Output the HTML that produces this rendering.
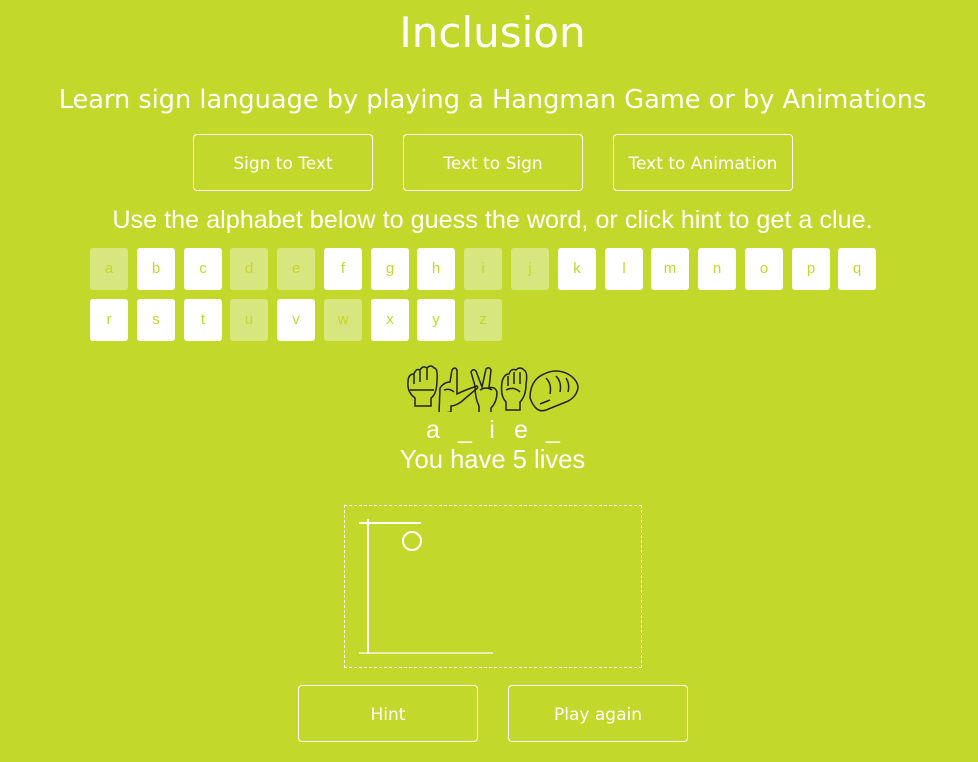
<!DOCTYPE html>
<html><head><style>
body{margin:0;width:978px;height:762px;background:#c2d82b;color:#fff;font-family:"DejaVu Sans",sans-serif;position:relative;overflow:hidden}
.a{position:absolute}
.btn{position:absolute;width:178px;height:55px;border:1px solid #fff;border-radius:4px;box-sizing:content-box;font-size:17px;line-height:58px;text-align:center}
.k{position:absolute;width:38px;height:42px;border-radius:3px;background:#fff;color:#c2d82b;font-family:"Liberation Sans",sans-serif;font-size:15px;line-height:41px;text-align:center}
.k.u{background:#d8e67f}
.w{position:absolute;top:414px;width:20px;margin-left:-10px;text-align:center;font-family:'Liberation Sans',sans-serif;font-size:25px;line-height:32px}
</style></head><body>
<div class="a" style="left:0;width:985px;top:8px;text-align:center;font-size:42px;line-height:50px">Inclusion</div>
<div class="a" style="left:0;width:985px;top:84px;text-align:center;font-size:25.6px;line-height:32px">Learn sign language by playing a Hangman Game or by Animations</div>
<div class="btn" style="left:193px;top:134px">Sign to Text</div>
<div class="btn" style="left:403px;top:134px">Text to Sign</div>
<div class="btn" style="left:613px;top:134px">Text to Animation</div>
<div class="a" style="left:0;width:985px;top:204px;text-align:center;font-family:'Liberation Sans',sans-serif;font-size:25.2px;line-height:32px">Use the alphabet below to guess the word, or click hint to get a clue.</div>
<div class="k u" style="left:90px;top:248px">a</div>
<div class="k" style="left:137px;top:248px">b</div>
<div class="k" style="left:184px;top:248px">c</div>
<div class="k u" style="left:230px;top:248px">d</div>
<div class="k u" style="left:277px;top:248px">e</div>
<div class="k" style="left:324px;top:248px">f</div>
<div class="k" style="left:371px;top:248px">g</div>
<div class="k" style="left:417px;top:248px">h</div>
<div class="k u" style="left:464px;top:248px">i</div>
<div class="k u" style="left:511px;top:248px">j</div>
<div class="k" style="left:558px;top:248px">k</div>
<div class="k" style="left:605px;top:248px">l</div>
<div class="k" style="left:651px;top:248px">m</div>
<div class="k" style="left:698px;top:248px">n</div>
<div class="k" style="left:745px;top:248px">o</div>
<div class="k" style="left:792px;top:248px">p</div>
<div class="k" style="left:838px;top:248px">q</div>
<div class="k" style="left:90px;top:299px">r</div>
<div class="k" style="left:137px;top:299px">s</div>
<div class="k" style="left:184px;top:299px">t</div>
<div class="k u" style="left:230px;top:299px">u</div>
<div class="k" style="left:277px;top:299px">v</div>
<div class="k u" style="left:324px;top:299px">w</div>
<div class="k" style="left:371px;top:299px">x</div>
<div class="k" style="left:417px;top:299px">y</div>
<div class="k u" style="left:464px;top:299px">z</div>
<svg class="a" style="left:400px;top:360px" width="185" height="52" fill="none" stroke="#222" stroke-width="1.5">
<path d="M8 22 q0-8 6-8 q2-6 6-4 q3-5 7-2 q4-4 7 0 q4 0 3 12 q0 14-6 18 v8 h-16 v-8 q-8-6-7-16z M10 30 h24 M14 14 v10 M20 10 v12 M27 8 v12"/>
<path d="M40 28 q4-6 10-6 l2-12 q3-4 5 0 l0 24 q8-4 20-8 q2 2-2 4 l-14 12 q-6 4-10 4 v6 l-12 2z M44 30 q6-2 10 2"/>
<path d="M75 26 l-4-14 q2-4 5-1 l6 16 l4-18 q3-3 5 1 l-2 18 q6-2 8 4 q0 10-6 16 v6 h-12 v-8 q-4-8-4-20z M80 30 q6-4 12 0"/>
<path d="M102 22 q2-8 7-8 q2-6 7-4 q4-4 8 0 q4 2 2 14 q0 12-6 18 v8 h-14 v-8 q-6-6-4-20z M108 16 v10 M114 12 v12 M120 12 v12 M106 30 q8-4 14 2"/>
<path d="M130 38 q0-18 14-24 q12-6 24 0 q10 6 10 14 q-2 10-12 14 q-10 4-20 8 q-10 4-16-12z M146 18 q6 6 4 16 M156 16 q6 6 4 16 M166 18 q4 6 2 14 M140 44 l10-4"/>
</svg>
<div class="w" style="left:433px">a</div>
<div class="w" style="left:465px">_</div>
<div class="w" style="left:492px">i</div>
<div class="w" style="left:521px">e</div>
<div class="w" style="left:553px">_</div>
<div class="a" style="left:0;width:985px;top:444px;text-align:center;font-family:'Liberation Sans',sans-serif;font-size:25.6px;line-height:32px">You have 5 lives</div>
<div class="a" style="left:344px;top:505px;width:296px;height:161px;border:1px dashed #fff"></div>
<svg class="a" style="left:0;top:0" width="978" height="762" fill="none" stroke="#fff" stroke-width="2">
<line x1="368" y1="519" x2="368" y2="654"/>
<line x1="359" y1="523" x2="421" y2="523"/>
<line x1="359" y1="653" x2="493" y2="653" stroke-width="1.2"/>
<circle cx="412" cy="541" r="9"/>
</svg>
<div class="btn" style="left:298px;top:685px">Hint</div>
<div class="btn" style="left:508px;top:685px">Play again</div>
</body></html>
